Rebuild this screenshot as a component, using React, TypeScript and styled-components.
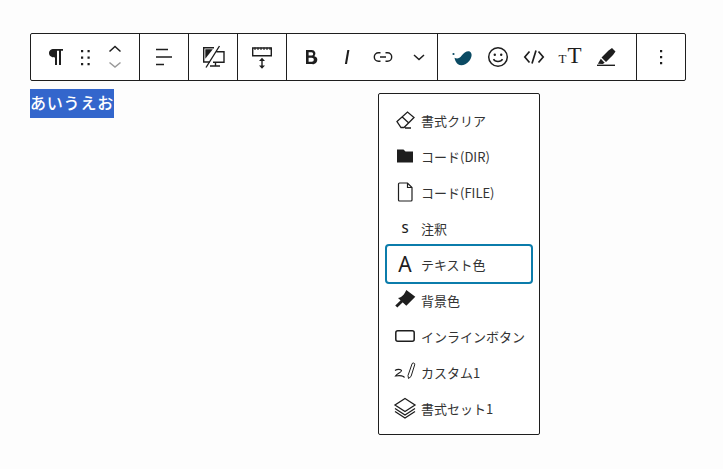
import React from "react";
import styled, { createGlobalStyle } from "styled-components";

const GlobalStyle = createGlobalStyle`
  html, body {
    margin: 0;
    padding: 0;
    background: #fdfdfd;
    font-family: "Noto Sans", "Noto Sans CJK JP", sans-serif;
  }
`;

const Page = styled.div`
  width: 723px;
  height: 469px;
  padding: 33px 30px 0;
  box-sizing: border-box;
  position: relative;
  overflow: hidden;
`;

const Toolbar = styled.div`
  display: flex;
  width: 656px;
  height: 48px;
  box-sizing: border-box;
  border: 1px solid #1e1e1e;
  border-radius: 2px;
  background: #fff;
`;

const Group = styled.div<{ $w: number; $pad?: number }>`
  display: flex;
  align-items: center;
  width: ${({ $w }) => $w}px;
  padding-left: ${({ $pad }) => $pad ?? 0}px;
  box-sizing: border-box;
  border-right: 1px solid #1e1e1e;
  justify-content: ${({ $pad }) => ($pad === undefined ? "center" : "flex-start")};
  &:last-child {
    border-right: 0;
  }
`;

const Tool = styled.span<{ $w: number }>`
  display: flex;
  align-items: center;
  justify-content: center;
  width: ${({ $w }) => $w}px;
  height: 46px;
  flex: none;
`;

const TypeSize = styled.span`
  display: flex;
  align-items: baseline;
  font-family: "Liberation Serif", serif;
  color: #1e1e1e;
  font-size: 23px;
  line-height: 22px;
  small {
    font-size: 13px;
    margin-right: 1px;
  }
`;

const Selected = styled.div`
  display: inline-block;
  margin-top: 8px;
  height: 29px;
  line-height: 28px;
  background: #3366cc;
  color: #fff;
  font-size: 16px;
  font-weight: 500;
  letter-spacing: 0.8px;
`;

const Menu = styled.div`
  position: absolute;
  left: 378px;
  top: 93px;
  width: 162px;
  height: 342px;
  box-sizing: border-box;
  padding: 8px 6px;
  border: 1px solid #1e1e1e;
  border-radius: 2px;
  background: #fff;
  display: flex;
  flex-direction: column;
`;

const MenuItem = styled.div<{ $active?: boolean }>`
  position: relative;
  display: flex;
  align-items: center;
  height: 36px;
  flex: none;
  font-family: "Noto Sans CJK JP", sans-serif;
  font-size: 13px;
  color: #333;
  white-space: nowrap;
  &::after {
    content: "";
    display: ${({ $active }) => ($active ? "block" : "none")};
    position: absolute;
    inset: -2px 0;
    border: 2px solid #0b7cab;
    border-radius: 4px;
  }
`;

const MenuIcon = styled.span`
  display: flex;
  align-items: center;
  justify-content: center;
  width: 36px;
  padding-left: 4px;
  box-sizing: border-box;
  flex: none;
`;

const LetterIcon = styled.span<{ $size: number; $weight?: number }>`
  font-family: "Noto Sans", sans-serif;
  font-size: ${({ $size }) => $size}px;
  font-weight: ${({ $weight }) => $weight ?? 400};
  line-height: 24px;
  color: #1e1e1e;
`;

const Icon = ({ children }: { children: React.ReactNode }) => (
  <svg width={24} height={24} viewBox="0 0 24 24" fill="none" style={{ display: "block" }}>
    {children}
  </svg>
);

const ink = "#1e1e1e";

const App = () => (
  <>
    <GlobalStyle />
    <Page>
      <Toolbar>
        <Group $w={109} $pad={8}>
          <Tool $w={31}>
            <Icon>
              <path d="M11 4h9v1.800h-2V20h-2V5.800h-2V20h-2v-7.500c-3.500 0-6-1.800-6-4.200S7.500 4 11 4z" fill={ink} />
            </Icon>
          </Tool>
          <Tool $w={30}>
            <Icon>
              <path d="M8 5h2.200v2.200H8zM14.500 5h2.200v2.200h-2.200zM8 11.500h2.200v2.200H8zM14.500 11.500h2.200v2.200h-2.200zM8 18h2.200v2.200H8zM14.500 18h2.200v2.200h-2.200z" fill={ink} />
            </Icon>
          </Tool>
          <Tool $w={30}>
            <svg width="16" height="28" viewBox="0 0 16 28" fill="none">
              <path d="M2.500 8.500 8 3.500l5.500 5" stroke={ink} strokeWidth="1.500" />
              <path d="M2.500 19.500 8 24l5.500-4.500" stroke="#9a9a9a" strokeWidth="1.500" />
            </svg>
          </Tool>
        </Group>
        <Group $w={49}>
          <Icon>
            <path d="M4 4.500h12M4 12h16M4 19.500h8" stroke={ink} strokeWidth="1.500" />
          </Icon>
        </Group>
        <Group $w={49}>
          <Icon>
            <path d="M13 2.700H2.700V17H9" stroke={ink} strokeWidth="1.400" />
            <path d="M4.300 4.200h7.500l-7.500 9.500z" fill={ink} />
            <path d="M15.500 6.700h7.500v10.500H12M14.500 17.500v3M9 21h10M5 22.500 18.500 1" stroke={ink} strokeWidth="1.400" />
          </Icon>
        </Group>
        <Group $w={49}>
          <Icon>
            <path d="M2.700 3v7.800h18.600V3z" stroke={ink} strokeWidth="1.400" />
            <path d="M5 2.500v2.500M8 2.500v2.500M11 2.500v2.500M14 2.500v2.500M17 2.500v2.500M20 2.500v2.500" stroke={ink} strokeWidth="1.100" />
            <path d="M12 14v8" stroke={ink} strokeWidth="1.400" />
            <path d="m9 16 3-3.200 3 3.200zM9 20.500l3 3.200 3-3.200z" fill={ink} />
          </Icon>
        </Group>
        <Group $w={151} $pad={6}>
          <Tool $w={36}>
            <Icon>
              <path d="M7 5h5.800a3.700 3.700 0 0 1 2.600 6.300A3.900 3.900 0 0 1 13 19H7zm2.600 2.200v3.400h2.900a1.700 1.700 0 0 0 0-3.400zm0 5.500v4.100h3.200a2 2 0 0 0 0-4.100z" fill={ink} />
            </Icon>
          </Tool>
          <Tool $w={36}>
            <Icon>
              <path d="M12.300 5h2.100L12 19H9.900z" fill={ink} />
            </Icon>
          </Tool>
          <Tool $w={36}>
            <Icon>
              <path d="M9.500 7.800H7.500a4.200 4.200 0 0 0 0 8.400h2M14.500 7.800h2a4.200 4.200 0 0 1 0 8.400h-2M9 12h6" stroke={ink} strokeWidth="1.400" />
            </Icon>
          </Tool>
          <Tool $w={36}>
            <Icon>
              <path d="m7 10 5 4.500 5-4.500" stroke={ink} strokeWidth="1.500" />
            </Icon>
          </Tool>
        </Group>
        <Group $w={199} $pad={6}>
          <Tool $w={36}>
            <Icon>
              <path d="M4.500 12.800c2.800 1.500 5 .5 7-2 2.500-3 6-5.500 8.500-4 2.500 1.500 2 6-1 9.500-3.500 4-8 5-11 3-1.500-1-3-3.500-3.500-6.500z" fill="#0a4a63" />
              <circle cx="3.500" cy="9" r="1.100" fill="#0a4a63" />
            </Icon>
          </Tool>
          <Tool $w={36}>
            <Icon>
              <circle cx="12" cy="12" r="9.300" stroke={ink} strokeWidth="1.500" />
              <circle cx="8.800" cy="9.800" r="1.200" fill={ink} />
              <circle cx="15.200" cy="9.800" r="1.200" fill={ink} />
              <path d="M7.500 14.200c1.500 3 7.500 3 9 0" stroke={ink} strokeWidth="1.500" />
            </Icon>
          </Tool>
          <Tool $w={36}>
            <Icon>
              <path d="M7.500 6.500 2.800 12l4.700 5.500M16.500 6.500l4.700 5.500-4.700 5.500M14 5.500l-4 13" stroke={ink} strokeWidth="1.700" />
            </Icon>
          </Tool>
          <Tool $w={36}>
            <TypeSize>
              <small>T</small>T
            </TypeSize>
          </Tool>
          <Tool $w={36}>
            <Icon>
              <path d="M14.500 5.500 18 3l3.500 3.500-2.500 3.500-7 7-4.500-4.500zM6.800 13.800l3.900 3.900-2 1.300-4.800-.3z" fill={ink} />
              <path d="M3 20.300h18" stroke={ink} strokeWidth="1.400" />
            </Icon>
          </Tool>
        </Group>
        <Group $w={47}>
          <Icon>
            <path d="M11 5h2.200v2.200H11zM11 11h2.200v2.200H11zM11 17h2.200v2.200H11z" fill={ink} />
          </Icon>
        </Group>
      </Toolbar>
      <Selected>あいうえお</Selected>
      <Menu>
        <MenuItem>
          <MenuIcon>
            <Icon>
              <path d="M4 13.500 14.500 4 21 9.500 11 19.500H8zM9 8.800l6.500 6M12 20h6" stroke={ink} strokeWidth="1.300" />
            </Icon>
          </MenuIcon>
          書式クリア
        </MenuItem>
        <MenuItem>
          <MenuIcon>
            <Icon>
              <path d="M4 5.500h6.500l2 2H20v11H4z" fill={ink} />
            </Icon>
          </MenuIcon>
          コード(DIR)
        </MenuItem>
        <MenuItem>
          <MenuIcon>
            <Icon>
              <path d="M5.500 4a1 1 0 0 1 1-1h8l4.500 4.500V20a1 1 0 0 1-1 1H6.500a1 1 0 0 1-1-1zM14.500 3v4.500H19" stroke={ink} strokeWidth="1.200" />
            </Icon>
          </MenuIcon>
          コード(FILE)
        </MenuItem>
        <MenuItem>
          <MenuIcon>
            <LetterIcon $size={13} $weight={500}>S</LetterIcon>
          </MenuIcon>
          注釈
        </MenuItem>
        <MenuItem $active>
          <MenuIcon>
            <LetterIcon $size={21}>A</LetterIcon>
          </MenuIcon>
          テキスト色
        </MenuItem>
        <MenuItem>
          <MenuIcon>
            <Icon>
              <path d="M13.300 2 22.300 8.700 13.300 17.700 5 10c3.500-.5 6.500-3.500 8.300-8z" fill={ink} />
              <path d="M3.300 18.500 9 13" stroke={ink} strokeWidth="3" />
            </Icon>
          </MenuIcon>
          背景色
        </MenuItem>
        <MenuItem>
          <MenuIcon>
            <Icon>
              <rect x="2.800" y="6.800" width="18.400" height="10.400" rx="2" stroke={ink} strokeWidth="1.500" />
            </Icon>
          </MenuIcon>
          インラインボタン
        </MenuItem>
        <MenuItem>
          <MenuIcon>
            <Icon>
              <path d="M2 10.500c2-1.500 6-1.500 6.500 0s-4.500 3-6 5.500c3-.5 6-.5 8 .5l1 1" stroke={ink} strokeWidth="1.100" />
              <path d="M15 15.500 19 4a1.300 1.300 0 0 1 2.700.8L18 16.500l-2.500 2z" stroke={ink} strokeWidth="1" />
            </Icon>
          </MenuIcon>
          カスタム1
        </MenuItem>
        <MenuItem>
          <MenuIcon>
            <Icon>
              <path d="M12 2.500 22 9l-10 6.500L2 9zM2 12.500 12 19l10-6.500M2 15.500 12 22l10-6.500" stroke={ink} strokeWidth="1.300" />
            </Icon>
          </MenuIcon>
          書式セット1
        </MenuItem>
      </Menu>
    </Page>
  </>
);

export default App;
